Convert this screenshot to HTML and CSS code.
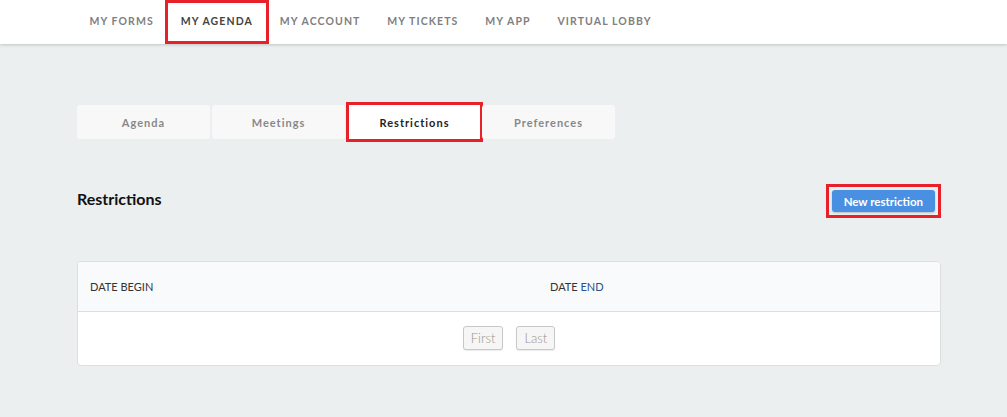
FILE: index.html
```html
<!DOCTYPE html>
<html lang="en">
<head>
    <meta charset="UTF-8">
    <title>My Agenda - Restrictions</title>
    <link rel="stylesheet" href="styles.css">
</head>
<body>
    <header class="topbar">
        <nav class="main-nav">
            <a href="#" class="nav-link">My forms</a>
            <a href="#" class="nav-link active">My agenda</a>
            <a href="#" class="nav-link">My account</a>
            <a href="#" class="nav-link">My tickets</a>
            <a href="#" class="nav-link">My app</a>
            <a href="#" class="nav-link">Virtual lobby</a>
        </nav>
    </header>

    <main class="content">
        <div class="tabs">
            <a href="#" class="tab">Agenda</a>
            <a href="#" class="tab">Meetings</a>
            <a href="#" class="tab active">Restrictions</a>
            <a href="#" class="tab">Preferences</a>
        </div>

        <div class="section-head">
            <h2>Restrictions</h2>
            <div class="btn-wrap">
                <button class="btn-primary">New restriction</button>
            </div>
        </div>

        <div class="card">
            <table class="list">
                <thead>
                    <tr>
                        <th class="col-begin">Date begin</th>
                        <th>Date <span class="sort">end</span></th>
                    </tr>
                </thead>
            </table>
            <div class="pager">
                <button class="page-btn">First</button>
                <button class="page-btn">Last</button>
            </div>
        </div>
    </main>
</body>
</html>
```

FILE: styles.css
```css
body {
    margin: 0;
    font-family: 'Lato', 'Open Sans', sans-serif;
    background: #ebeff0;
    color: #222;
}

.topbar {
    background: #fff;
    height: 44px;
    box-shadow: 0 1px 3px rgba(0, 0, 0, 0.18);
}

.main-nav {
    display: flex;
    height: 44px;
    padding-left: 76px;
}

.nav-link {
    display: flex;
    align-items: center;
    padding: 0 13.4px 2px;
    font-size: 10.5px;
    font-weight: bold;
    letter-spacing: 1.1px;
    text-transform: uppercase;
    text-decoration: none;
    color: #808080;
}

.nav-link.active {
    color: #444;
    padding: 0 16px 2px;
    margin: 0 -2.6px;
    outline: 3px solid #e8202a;
    outline-offset: -3px;
}

.content {
    padding: 61px 66px 0 77px;
}

.tabs {
    display: grid;
    grid-template-columns: repeat(4, 133px);
    gap: 2px;
}

.tab {
    height: 34px;
    display: flex;
    align-items: center;
    justify-content: center;
    background: #f8f8f8;
    border-radius: 3px;
    font-size: 11px;
    font-weight: bold;
    letter-spacing: 1px;
    text-decoration: none;
    color: #888;
}

.tab.active {
    background: #fff;
    color: #222;
    border-radius: 0;
    outline: 3px solid #e8202a;
    outline-offset: 0;
    margin-left: 2px;
}

.section-head {
    display: flex;
    justify-content: space-between;
    align-items: center;
    margin-top: 45px;
}

.section-head h2 {
    margin: 0;
    padding-bottom: 5px;
    font-size: 16px;
    font-weight: bold;
    color: #111;
}

.btn-wrap {
    border: 3px solid #e8202a;
    padding: 3px;
}

.btn-primary {
    display: block;
    height: 22px;
    padding: 0 12px;
    background: #4a90e2;
    border: none;
    border-radius: 3px;
    color: #fff;
    font-family: inherit;
    font-size: 11.5px;
    font-weight: bold;
    box-shadow: 0 1px 2px rgba(0, 0, 0, 0.2);
}

.card {
    margin-top: 43px;
    background: #fff;
    border: 1px solid #dcdfe0;
    border-radius: 4px;
    overflow: hidden;
}

.list {
    width: 100%;
    border-collapse: collapse;
}

.list th {
    height: 49px;
    padding: 0 12px;
    text-align: left;
    font-size: 11px;
    font-weight: normal;
    text-transform: uppercase;
    color: #333;
    background: #f9fafc;
    border-bottom: 1px solid #dcdfe0;
}

.list th.col-begin {
    width: 436px;
}

.sort {
    color: #2b4f86;
}

.pager {
    display: flex;
    justify-content: center;
    gap: 13px;
    padding: 14px 0 15px;
}

.page-btn {
    height: 24px;
    padding: 0 7px;
    background: #f6f6f6;
    border: 1px solid #c8c8c8;
    border-radius: 3px;
    font-family: inherit;
    font-size: 13px;
    font-weight: 300;
    color: #9a9488;
    box-shadow: 0 1px 1px rgba(0, 0, 0, 0.08);
}
```
